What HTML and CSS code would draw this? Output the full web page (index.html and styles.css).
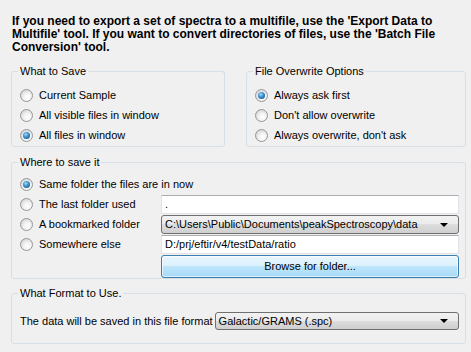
FILE: index.html
```html
<!DOCTYPE html>
<html>
<head>
<meta charset="utf-8">
<link rel="stylesheet" href="styles.css">
</head>
<body>
<div class="page">
  <p class="intro">If you need to export a set of spectra to a multifile, use the 'Export Data to<br>Multifile' tool. If you want to convert directories of files, use the 'Batch File<br>Conversion' tool.</p>

  <div class="toprow">
    <fieldset class="group">
      <legend>What to Save</legend>
      <div class="stack">
        <label class="radio"><span class="dot"></span>Current Sample</label>
        <label class="radio"><span class="dot"></span>All visible files in window</label>
        <label class="radio"><span class="dot on"></span>All files in window</label>
      </div>
    </fieldset>
    <fieldset class="group">
      <legend>File Overwrite Options</legend>
      <div class="stack">
        <label class="radio"><span class="dot on"></span>Always ask first</label>
        <label class="radio"><span class="dot"></span>Don't allow overwrite</label>
        <label class="radio"><span class="dot"></span>Always overwrite, don't ask</label>
      </div>
    </fieldset>
  </div>

  <fieldset class="group where">
    <legend>Where to save it</legend>
    <div class="wgrid">
      <label class="radio full"><span class="dot on"></span>Same folder the files are in now</label>
      <label class="radio"><span class="dot"></span>The last folder used</label>
      <div class="input">.</div>
      <label class="radio"><span class="dot"></span>A bookmarked folder</label>
      <div class="combo"><span>C:\Users\Public\Documents\peakSpectroscopy\data</span><span class="arrow"></span></div>
      <label class="radio"><span class="dot"></span>Somewhere else</label>
      <div class="input">D:/prj/eftir/v4/testData/ratio</div>
      <div class="spacer"></div>
      <div class="button">Browse for folder...</div>
    </div>
  </fieldset>

  <fieldset class="group format">
    <legend>What Format to Use.</legend>
    <div class="frow">
      <span class="flabel">The data will be saved in this file format</span>
      <div class="combo"><span>Galactic/GRAMS (.spc)</span><span class="arrow"></span></div>
    </div>
  </fieldset>
</div>
</body>
</html>
```

FILE: styles.css
```css
* { box-sizing: border-box; }
html, body { margin: 0; padding: 0; background: #f0f0f0; }
body {
  font-family: "Liberation Sans", Arial, sans-serif;
  font-size: 11px;
  line-height: 13px;
  color: #000;
  width: 471px;
  height: 352px;
  overflow: hidden;
}
.page { padding: 15px 5px 0 11px; }
.intro {
  margin: 0 0 11px 1px;
  font-weight: bold;
  font-size: 12px;
  white-space: nowrap;
}
.toprow {
  display: grid;
  grid-template-columns: 214px 1fr;
  column-gap: 21px;
}
.group {
  margin: 0;
  padding: 0;
  border: 1px solid #d5dfe5;
  border-radius: 3px;
  min-width: 0;
}
.group legend {
  margin-left: 6px;
  padding: 0 2px;
  line-height: 13px;
}
.stack {
  display: flex;
  flex-direction: column;
  padding: 7px 0 1px 8px;
}
.radio {
  display: flex;
  align-items: center;
  height: 20px;
  white-space: nowrap;
}
.dot {
  width: 13px;
  height: 13px;
  border-radius: 50%;
  border: 1px solid #979797;
  background: radial-gradient(circle at 60% 65%, #ffffff 0%, #f4f4f4 35%, #d6d6d6 80%, #c8c8c8 100%);
  margin-right: 6px;
  flex: none;
  display: flex;
  align-items: center;
  justify-content: center;
}
.dot.on::after {
  content: "";
  width: 7px;
  height: 7px;
  border-radius: 50%;
  background: radial-gradient(circle at 40% 35%, #a6dcfb 0%, #3d94d1 40%, #1b5f93 80%, #154c77 100%);
}
.where { margin-top: 9px; }
.wgrid {
  display: grid;
  grid-template-columns: 141px 1fr;
  grid-auto-rows: 19px;
  row-gap: 1px;
  padding: 6px 6px 4px 8px;
}
.wgrid .radio { height: 19px; }
.wgrid .full { grid-column: 1 / 3; }
.input {
  background: #fff;
  border: 1px solid #e2e3ea;
  border-top-color: #abadb3;
  padding: 0 3px;
  display: flex;
  align-items: center;
  white-space: nowrap;
  overflow: hidden;
}
.combo {
  border: 1px solid #707070;
  border-radius: 3px;
  background: linear-gradient(#f2f2f2 0%, #ebebeb 50%, #dddddd 50%, #cfcfcf 100%);
  padding: 0 3px;
  display: flex;
  align-items: center;
  justify-content: space-between;
  white-space: nowrap;
  overflow: hidden;
}
.arrow {
  width: 0;
  height: 0;
  border-left: 4px solid transparent;
  border-right: 4px solid transparent;
  border-top: 4px solid #000;
  margin-right: 7px;
}
.button {
  height: 23px;
  border: 1px solid #3c7fb1;
  border-radius: 3px;
  background: linear-gradient(#eaf6fd 0%, #d9f0fc 50%, #bee6fd 50%, #a7d9f5 100%);
  box-shadow: inset 0 0 0 1px rgba(255,255,255,0.6);
  display: flex;
  align-items: center;
  justify-content: center;
}
.format { margin-top: 8px; }
.frow {
  display: flex;
  align-items: center;
  padding: 12px 6px 13px 8px;
}
.frow .combo { height: 18px; flex: 1; margin-left: 2px; }
.flabel { white-space: nowrap; }
```
